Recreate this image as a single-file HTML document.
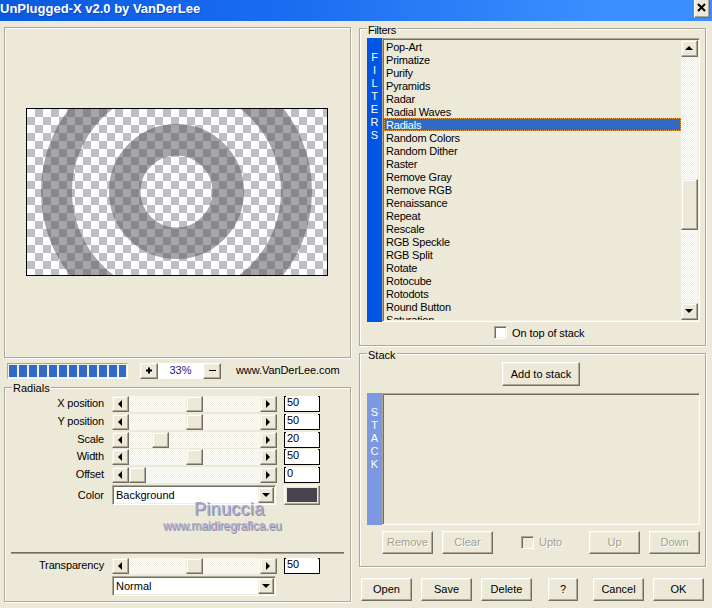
<!DOCTYPE html><html><head><meta charset="utf-8"><style>
*{margin:0;padding:0;box-sizing:border-box}
html,body{width:712px;height:608px;overflow:hidden;background:#ECE9D8;font-family:"Liberation Sans",sans-serif;font-size:11px;color:#000}
.a{position:absolute}
.t{position:absolute;white-space:nowrap;line-height:13px}
.etch{position:absolute;border:1px solid #ACA899;box-shadow:1px 1px 0 #fff, inset 1px 1px 0 #fff}
.lbl{position:absolute;background:#ECE9D8;padding:0 1px;line-height:13px;white-space:nowrap}
.btn{position:absolute;background:#ECE9D8;border-style:solid;border-width:1px;border-color:#fff #716F64 #716F64 #fff;box-shadow:inset -1px -1px 0 #ACA899, inset 1px 1px 0 #F1EFE2;text-align:center;line-height:20px;white-space:nowrap}
.sunk{position:absolute;border-style:solid;border-width:1px;border-color:#ACA899 #fff #fff #ACA899;box-shadow:inset 1px 1px 0 #716F64, inset -1px -1px 0 #F1EFE2}
.dis{color:#A29F90;text-shadow:1px 1px 0 #fff}
.dither{background-color:#F1EFE6;background-image:linear-gradient(45deg,#FDFDFA 25%,transparent 25%,transparent 75%,#FDFDFA 75%),linear-gradient(45deg,#FDFDFA 25%,transparent 25%,transparent 75%,#FDFDFA 75%);background-size:2px 2px;background-position:0 0,1px 1px}
.sbtn{position:absolute;background:#ECE9D8;border-style:solid;border-width:1px;border-color:#F1EFE2 #716F64 #716F64 #F1EFE2;box-shadow:inset -1px -1px 0 #ACA899, inset 1px 1px 0 #fff}
.edit{position:absolute;background:linear-gradient(90deg,#000 0,#000 1px,#fff 1px,#fff calc(100% - 1px),#000 calc(100% - 1px)) top/100% 1px no-repeat,#fff;border:1px solid #000;border-top:0;padding-left:2px;line-height:13px}
.row{position:absolute;white-space:nowrap;line-height:13px;letter-spacing:-0.2px}
</style></head><body>
<div class="a" style="left:0;top:0;width:712px;height:21px;background:linear-gradient(90deg,#0A5ADF 0%,#1A6CF0 40%,#3D8FFF 85%,#3B8DFD 100%)"></div>
<div class="t" style="left:0px;top:1px;font-size:13px;font-weight:bold;color:#fff;line-height:15px;text-shadow:1px 1px 0 #0B45C8">UnPlugged-X v2.0 by VanDerLee</div>
<div class="btn" style="left:694px;top:-2px;width:16px;height:20px"></div>
<svg class="a" style="left:694px;top:0" width="16" height="18"><path d="M4 4 L11 11 M11 4 L4 11" stroke="#000" stroke-width="2"/></svg>
<div class="etch" style="left:4px;top:27px;width:347px;height:331px"></div>
<div class="a" style="left:26px;top:108px;width:302px;height:168px;border:1px solid #000;overflow:hidden">
<svg width="300" height="166" style="display:block">
<defs><pattern id="ck" width="16" height="16" patternUnits="userSpaceOnUse">
<rect width="16" height="16" fill="#fff"/><rect x="8" y="0" width="8" height="8" fill="#BFBEC3"/><rect x="0" y="8" width="8" height="8" fill="#BFBEC3"/>
</pattern></defs>
<rect width="300" height="166" fill="url(#ck)"/>
<g fill="none" stroke="#5A5860" stroke-opacity="0.54">
<circle cx="149.5" cy="82.5" r="51.75" stroke-width="31.5"/>
<circle cx="149.5" cy="82.5" r="120" stroke-width="31"/>
</g></svg></div>
<div class="a" style="left:7px;top:363px;width:121px;height:16px;border:1px solid;border-color:#ACA899 #fff #fff #ACA899;overflow:hidden;background:#F4F1E4"><div class="a" style="left:1px;top:1px;width:117px;height:12px;background:repeating-linear-gradient(90deg,#3169C6 0,#3169C6 8px,#F4F1E4 8px,#F4F1E4 10px)"></div></div>
<div class="btn" style="left:140px;top:363px;width:18px;height:16px"></div>
<svg class="a" style="left:140px;top:363px" width="18" height="16"><path d="M9 4.5 V10.5 M6 7.5 H12" stroke="#000" stroke-width="2"/></svg>
<div class="a" style="left:158px;top:363px;width:45px;height:16px;background:#fff"></div>
<div class="t" style="left:158px;top:364px;width:45px;text-align:center;color:#1C2080;font-size:11px">33%</div>
<div class="btn" style="left:203px;top:363px;width:18px;height:16px"></div>
<svg class="a" style="left:203px;top:363px" width="18" height="16"><path d="M6 7.5 H13" stroke="#000" stroke-width="1"/></svg>
<div class="t" style="left:236px;top:364px;letter-spacing:-0.08px">www.VanDerLee.com</div>
<div class="etch" style="left:4px;top:387px;width:347px;height:215px"></div>
<div class="lbl" style="left:12px;top:382px">Radials</div>
<div class="t" style="right:608px;top:397px;letter-spacing:-0.15px">X position</div>
<div class="a dither" style="left:112px;top:396px;width:165px;height:16px"></div>
<div class="sbtn" style="left:112px;top:396px;width:17px;height:16px"></div>
<div class="sbtn" style="left:260px;top:396px;width:17px;height:16px"></div>
<div class="sbtn" style="left:186px;top:396px;width:17px;height:16px"></div>
<div class="edit" style="left:284px;top:396px;width:36px;height:16px">50</div>
<div class="t" style="right:608px;top:415px;letter-spacing:-0.15px">Y position</div>
<div class="a dither" style="left:112px;top:414px;width:165px;height:16px"></div>
<div class="sbtn" style="left:112px;top:414px;width:17px;height:16px"></div>
<div class="sbtn" style="left:260px;top:414px;width:17px;height:16px"></div>
<div class="sbtn" style="left:186px;top:414px;width:17px;height:16px"></div>
<div class="edit" style="left:284px;top:414px;width:36px;height:16px">50</div>
<div class="t" style="right:608px;top:433px;letter-spacing:-0.15px">Scale</div>
<div class="a dither" style="left:112px;top:432px;width:165px;height:16px"></div>
<div class="sbtn" style="left:112px;top:432px;width:17px;height:16px"></div>
<div class="sbtn" style="left:260px;top:432px;width:17px;height:16px"></div>
<div class="sbtn" style="left:152px;top:432px;width:17px;height:16px"></div>
<div class="edit" style="left:284px;top:432px;width:36px;height:16px">20</div>
<div class="t" style="right:608px;top:450px;letter-spacing:-0.15px">Width</div>
<div class="a dither" style="left:112px;top:449px;width:165px;height:16px"></div>
<div class="sbtn" style="left:112px;top:449px;width:17px;height:16px"></div>
<div class="sbtn" style="left:260px;top:449px;width:17px;height:16px"></div>
<div class="sbtn" style="left:186px;top:449px;width:17px;height:16px"></div>
<div class="edit" style="left:284px;top:449px;width:36px;height:16px">50</div>
<div class="t" style="right:608px;top:468px;letter-spacing:-0.15px">Offset</div>
<div class="a dither" style="left:112px;top:467px;width:165px;height:16px"></div>
<div class="sbtn" style="left:112px;top:467px;width:17px;height:16px"></div>
<div class="sbtn" style="left:260px;top:467px;width:17px;height:16px"></div>
<div class="sbtn" style="left:129px;top:467px;width:17px;height:16px"></div>
<div class="edit" style="left:284px;top:467px;width:36px;height:16px">0</div>
<div class="t" style="right:608px;top:489px">Color</div>
<div class="sunk" style="left:112px;top:485px;width:164px;height:20px;background:#fff"></div>
<div class="t" style="left:116px;top:489px">Background</div>
<div class="sbtn" style="left:258px;top:487px;width:16px;height:16px"></div>
<div class="btn" style="left:284px;top:485px;width:36px;height:20px"></div>
<div class="a" style="left:287px;top:488px;width:30px;height:14px;background:#46434F"></div>
<div class="t" style="left:194px;top:499px;font-size:18px;line-height:20px;color:#ABAACB;text-shadow:1px 1px 0 #8C8BA8;letter-spacing:0.3px">Pinuccia</div>
<div class="t" style="left:163px;top:519px;font-size:12px;line-height:14px;color:#ABAACB;text-shadow:1px 1px 0 #8C8BA8;letter-spacing:-0.1px">www.maidiregrafica.eu</div>
<div class="a" style="left:11px;top:552px;width:333px;height:2px;border-top:1px solid #716F64;border-bottom:1px solid #9C998B"></div>
<div class="t" style="right:608px;top:559px;letter-spacing:-0.15px">Transparency</div>
<div class="a dither" style="left:112px;top:558px;width:165px;height:16px"></div>
<div class="sbtn" style="left:112px;top:558px;width:17px;height:16px"></div>
<div class="sbtn" style="left:260px;top:558px;width:17px;height:16px"></div>
<div class="sbtn" style="left:186px;top:558px;width:17px;height:16px"></div>
<div class="edit" style="left:284px;top:558px;width:36px;height:16px">50</div>
<div class="sunk" style="left:112px;top:576px;width:164px;height:20px;background:#fff"></div>
<div class="t" style="left:116px;top:580px">Normal</div>
<div class="sbtn" style="left:258px;top:578px;width:16px;height:16px"></div>
<div class="etch" style="left:359px;top:28px;width:347px;height:318px"></div>
<div class="lbl" style="left:367px;top:24px;letter-spacing:-0.3px">Filters</div>
<div class="a" style="left:367px;top:38px;width:15px;height:284px;background:#0055E5"></div>
<div class="t" style="left:367px;width:15px;text-align:center;top:51px;color:#fff">F</div>
<div class="t" style="left:367px;width:15px;text-align:center;top:64px;color:#fff">I</div>
<div class="t" style="left:367px;width:15px;text-align:center;top:77px;color:#fff">L</div>
<div class="t" style="left:367px;width:15px;text-align:center;top:90px;color:#fff">T</div>
<div class="t" style="left:367px;width:15px;text-align:center;top:103px;color:#fff">E</div>
<div class="t" style="left:367px;width:15px;text-align:center;top:116px;color:#fff">R</div>
<div class="t" style="left:367px;width:15px;text-align:center;top:129px;color:#fff">S</div>
<div class="sunk" style="left:382px;top:38px;width:318px;height:284px;background:#ECE9D8;overflow:hidden"></div>
<div class="a" style="left:384px;top:40px;width:297px;height:280px;overflow:hidden">
<div class="row" style="left:2px;top:1px">Pop-Art</div>
<div class="row" style="left:2px;top:14px">Primatize</div>
<div class="row" style="left:2px;top:27px">Purify</div>
<div class="row" style="left:2px;top:40px">Pyramids</div>
<div class="row" style="left:2px;top:53px">Radar</div>
<div class="row" style="left:2px;top:66px">Radial Waves</div>
<div class="a" style="left:0;top:78px;width:297px;height:13px;background:#316AC5;border:1px dotted #E8A040"></div>
<div class="row" style="left:2px;top:79px;color:#fff">Radials</div>
<div class="row" style="left:2px;top:92px">Random Colors</div>
<div class="row" style="left:2px;top:105px">Random Dither</div>
<div class="row" style="left:2px;top:118px">Raster</div>
<div class="row" style="left:2px;top:131px">Remove Gray</div>
<div class="row" style="left:2px;top:144px">Remove RGB</div>
<div class="row" style="left:2px;top:157px">Renaissance</div>
<div class="row" style="left:2px;top:170px">Repeat</div>
<div class="row" style="left:2px;top:183px">Rescale</div>
<div class="row" style="left:2px;top:196px">RGB Speckle</div>
<div class="row" style="left:2px;top:209px">RGB Split</div>
<div class="row" style="left:2px;top:222px">Rotate</div>
<div class="row" style="left:2px;top:235px">Rotocube</div>
<div class="row" style="left:2px;top:248px">Rotodots</div>
<div class="row" style="left:2px;top:261px">Round Button</div>
<div class="row" style="left:2px;top:274px">Saturation</div>
</div>
<div class="a dither" style="left:681px;top:40px;width:17px;height:280px"></div>
<div class="sbtn" style="left:681px;top:40px;width:17px;height:17px"></div>
<div class="sbtn" style="left:681px;top:179px;width:17px;height:51px"></div>
<div class="sbtn" style="left:681px;top:303px;width:17px;height:17px"></div>
<div class="sunk" style="left:494px;top:326px;width:13px;height:13px;background:#fff"></div>
<div class="t" style="left:512px;top:327px;letter-spacing:-0.1px">On top of stack</div>
<div class="etch" style="left:359px;top:353px;width:347px;height:214px"></div>
<div class="lbl" style="left:367px;top:349px">Stack</div>
<div class="btn" style="left:502px;top:362px;width:78px;height:24px;line-height:22px">Add to stack</div>
<div class="a" style="left:367px;top:393px;width:15px;height:132px;background:#7B98E0"></div>
<div class="t" style="left:367px;width:15px;text-align:center;top:406px;color:#fff">S</div>
<div class="t" style="left:367px;width:15px;text-align:center;top:419px;color:#fff">T</div>
<div class="t" style="left:367px;width:15px;text-align:center;top:432px;color:#fff">A</div>
<div class="t" style="left:367px;width:15px;text-align:center;top:445px;color:#fff">C</div>
<div class="t" style="left:367px;width:15px;text-align:center;top:458px;color:#fff">K</div>
<div class="sunk" style="left:382px;top:393px;width:318px;height:132px;background:#ECE9D8"></div>
<div class="btn dis" style="left:382px;top:531px;width:51px;height:23px">Remove</div>
<div class="btn dis" style="left:442px;top:531px;width:51px;height:23px">Clear</div>
<div class="sunk" style="left:521px;top:536px;width:13px;height:13px"></div>
<div class="t dis" style="left:539px;top:536px">Upto</div>
<div class="btn dis" style="left:589px;top:531px;width:51px;height:23px">Up</div>
<div class="btn dis" style="left:649px;top:531px;width:51px;height:23px">Down</div>
<div class="btn" style="left:361px;top:578px;width:51px;height:23px">Open</div>
<div class="btn" style="left:421px;top:578px;width:51px;height:23px">Save</div>
<div class="btn" style="left:481px;top:578px;width:51px;height:23px">Delete</div>
<div class="btn" style="left:548px;top:578px;width:30px;height:23px">?</div>
<div class="btn" style="left:593px;top:578px;width:51px;height:23px">Cancel</div>
<div class="btn" style="left:653px;top:578px;width:51px;height:23px">OK</div>
<svg class="a" style="left:0;top:0" width="712" height="608"><polygon points="122,400 122,408 118,404" fill="#000"/><polygon points="266,400 266,408 270,404" fill="#000"/><polygon points="122,418 122,426 118,422" fill="#000"/><polygon points="266,418 266,426 270,422" fill="#000"/><polygon points="122,436 122,444 118,440" fill="#000"/><polygon points="266,436 266,444 270,440" fill="#000"/><polygon points="122,453 122,461 118,457" fill="#000"/><polygon points="266,453 266,461 270,457" fill="#000"/><polygon points="122,471 122,479 118,475" fill="#000"/><polygon points="266,471 266,479 270,475" fill="#000"/><polygon points="262,493 270,493 266,497" fill="#000"/><polygon points="122,562 122,570 118,566" fill="#000"/><polygon points="266,562 266,570 270,566" fill="#000"/><polygon points="262,584 270,584 266,588" fill="#000"/><polygon points="685,50 693,50 689,46" fill="#000"/><polygon points="685,309 693,309 689,313" fill="#000"/></svg>
</body></html>
